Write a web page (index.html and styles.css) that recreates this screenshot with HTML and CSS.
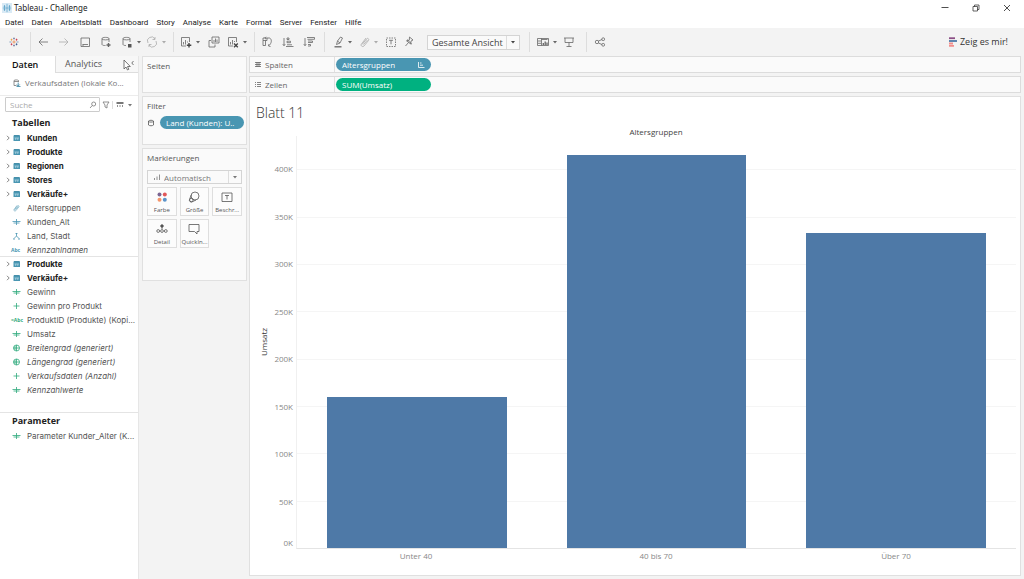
FILE: index.html
```html
<!DOCTYPE html>
<html lang="de">
<head>
<meta charset="utf-8">
<title>Tableau - Challenge</title>
<link rel="stylesheet" href="styles.css">
</head>
<body>
<svg class="defs" aria-hidden="true">
  <symbol id="logo" viewBox="0 0 12 12"><path d="M6 4v4M4 6h4" stroke="#e8762d"/><path d="M6 .5v2.500M5 1.800h2M6 9v2.500M5 10.200h2" stroke="#5b6591"/><path d="M.5 6H3M9 6h2.500" stroke="#4e79a7"/><path d="M3 2v2.500M2 3.200h2.200" stroke="#eb912c"/><path d="M9 2v2.500M8 3.200h2.200M3 7.500V10M2 8.800h2.200" stroke="#c72035"/><path d="M9 7.500V10M8 8.800h2.200" stroke="#1f447e"/></symbol>
  <symbol id="tile" viewBox="0 0 12 12"><path d="M6 1v10M1 6h10M3 2.500v7M9 2.500v7M2 4h2M8 4h2M2 8h2M8 8h2" stroke="#4f9bc4"/></symbol>
  <symbol id="back" viewBox="0 0 12 12"><path d="M11 6H2M5.500 2.500 2 6l3.500 3.500"/></symbol>
  <symbol id="fwd" viewBox="0 0 12 12"><path d="M1 6h9M6.500 2.500 10 6 6.500 9.500"/></symbol>
  <symbol id="save" viewBox="0 0 12 12"><path d="M2 2h8.500v8.500H2zM3.500 8.500h5.500M4 10V8.500"/></symbol>
  <symbol id="dbadd" viewBox="0 0 12 12"><path d="M2 8.500v-6C2 1 9 1 9 2.500V6M2 3c1 1.200 6 1.200 7 0M2 8.500c.5 1 2 1 3.500 1"/><path d="M8.500 7v4M6.500 9h4" stroke-width="1.400"/></symbol>
  <symbol id="dbpause" viewBox="0 0 12 12"><path d="M2 8.500v-6C2 1 9 1 9 2.500V6M2 3c1 1.200 6 1.200 7 0M2 8.500c.5 1 2 1 3 1"/><path d="M7 8h3.500v3.500H7z" fill="#555" stroke="none"/></symbol>
  <symbol id="refresh" viewBox="0 0 12 12"><path d="M2 7a4 4 0 0 1 7-4M10 5a4 4 0 0 1-7 4M9 1v2.500H6.500M3 11V8.500h2.500"/></symbol>
  <symbol id="chartadd" viewBox="0 0 12 12"><path d="M6 10H1.500V1.500h8V6M3.500 8.500V6M5.500 8.500V4M7.500 6.500V5.500"/><path d="M9 7v4.500M6.800 9.200h4.500" stroke="#444" stroke-width="1.400"/></symbol>
  <symbol id="dup" viewBox="0 0 12 12"><path d="M4 1h7v6H4zM6 6V4M7.500 6V2.500M9 6V3.500M3 4.500H1V11h6V8.500"/></symbol>
  <symbol id="chartx" viewBox="0 0 12 12"><path d="M6 10H1.500V1.500h8V6M3.500 8.500V6M5.500 8.500V4M7.500 6V5"/><path d="m7 7.500 3.800 3.800M10.800 7.500 7 11.300" stroke="#444" stroke-width="1.300"/></symbol>
  <symbol id="swap" viewBox="0 0 12 12"><path d="M2 2h6.500c2.500 1 2.500 5-.5 7.500M2 2v2.500h4V2M2 4.500v5h2.500v-5M5 .8 3.800 2 5 3.200M9.500 10.500 7.500 10l.5-2"/></symbol>
  <symbol id="asc" viewBox="0 0 12 12"><path d="M2 2v7.500M.8 8.200 2 9.700l1.200-1.500M5 2h2v1.500H5zM5 5.200h3.500v1.500H5zM4 10.500h7.500M5 8.800h5"/></symbol>
  <symbol id="desc" viewBox="0 0 12 12"><path d="M2 2v7.500M.8 8.200 2 9.700l1.200-1.500M4 1.500h7.500v1.800H4.500M5 5h4.500v1.500H5M5 8.500h2.500V10H5"/></symbol>
  <symbol id="pen" viewBox="0 0 12 12"><path d="M3.500 8.500 4.500 5l3-4 2 1-2.500 5zM4.500 5l2.500 2"/><path d="M1.500 10.800h7" stroke-width="1.300"/></symbol>
  <symbol id="clip" viewBox="0 0 12 12"><path d="M3 8.500 7.500 3c1-1.500 3 0 2 1.500L5 10C3.500 11.500 1 9.500 2.500 8L7 2M4.500 8.500l4-4.500"/></symbol>
  <symbol id="text" viewBox="0 0 12 12"><path d="M1.500 2h9v8.500h-9z" stroke-dasharray="1.500 1"/><path d="M4 4.300h4M6 4.300v4"/></symbol>
  <symbol id="pin" viewBox="0 0 12 12"><path d="m6.500 1 3.500 3-2 1-.3 3L3.500 4.800l2.800-.6zM5.500 6.500 2.500 10M4 3.500l5 4.800"/></symbol>
  <symbol id="cards" viewBox="0 0 12 12"><path d="M.5 2.500h11v7H.5zM4.500 2.500v7M1 5h3M1 7.300h3M4.500 3.500h6"/><path d="M6.300 9V7M8.200 9V5.500M10 9V6.500" stroke-width="1.300"/></symbol>
  <symbol id="present" viewBox="0 0 12 12"><path d="M1 2h10M2 2v4.500h8V2M6 6.500v4M3.500 10.500h5"/></symbol>
  <symbol id="share" viewBox="0 0 12 12"><path d="m4.500 5 3.500-1.500M4.500 7 8 8.500"/><circle cx="3" cy="6" r="1.700"/><circle cx="9.200" cy="3.200" r="1.400"/><circle cx="9.200" cy="8.800" r="1.400"/></symbol>
  <symbol id="show" viewBox="0 0 10 10"><path d="M1 1.200h6" stroke="#8b4f86" stroke-width="1.800"/><path d="M1 4h8" stroke="#4e79a7" stroke-width="1.800"/><path d="M1 6.500h4M1 8.800h5" stroke="#f28e8c" stroke-width="1.800"/></symbol>
  <symbol id="caret" viewBox="0 0 6 6"><path d="M1 2h4L3 4.500z" fill="currentColor" stroke="none"/></symbol>
  <symbol id="chev" viewBox="0 0 6 6"><path d="m2 .8 2.200 2.200L2 5.200"/></symbol>
  <symbol id="table" viewBox="0 0 8 8"><path d="M1 1.500h6.500V7H1z" fill="#4996b2" stroke="none"/><path d="M1.500 1.500h5.500" stroke="#2f7f9e"/><path d="M3.200 4v2M5.300 4v2M2 4h4.500" stroke="#b9dae5" stroke-width=".7"/></symbol>
  <symbol id="hash" viewBox="0 0 10 8"><path d="M1 3.500h8M2 5h6M5 1v6"/></symbol>
  <symbol id="plus" viewBox="0 0 10 8"><path d="M2 4h6M5 1v6"/></symbol>
  <symbol id="geo" viewBox="0 0 10 8"><path d="M5 1v3L2.500 6.500M5 4l2.500 2.500M4 1.500h2M1.500 7h2M6.500 7h2"/></symbol>
  <symbol id="globe" viewBox="0 0 10 8"><circle cx="5" cy="4" r="3"/><path d="M2 4h6M5 1v6M3.500 2v4"/></symbol>
  <symbol id="search" viewBox="0 0 8 8"><circle cx="4.700" cy="3" r="2"/><path d="M3.300 4.500 1 7"/></symbol>
  <symbol id="filter" viewBox="0 0 8 8"><path d="M1 1h6L5 4v3L3 6V4z"/></symbol>
  <symbol id="view" viewBox="0 0 8 8"><path d="M.5 2h7" stroke-width="2"/><path d="M1.500 4v2M4 4v2M6.500 4v2"/></symbol>
  <symbol id="db" viewBox="0 0 8 8"><path d="M1.500 2v4c1 1 4 1 5 0V2c-1-1-4-1-5 0zM1.500 2.500c1 .8 4 .8 5 0"/></symbol>
  <symbol id="source" viewBox="0 0 8 8"><path d="M1 1.500v5h2.500M1 1.500c1-.8 3.500-.8 4.500 0V3M1 2.500h4.500" stroke="#777"/><path d="M5.200 3.500v3M3.800 5.500 5.200 7l1.500-1.500M3.500 7.500h4" stroke="#2f7f9e"/></symbol>
  <symbol id="bars" viewBox="0 0 8 8"><path d="M1.500 7V5M4 7V3.500M6.500 7V1.500"/></symbol>
</svg>

<header>
  <div class="titlebar">
    <svg class="i10 tile"><use href="#tile"/></svg>
    <span>Tableau - Challenge</span>
    <div class="window-buttons">
      <button aria-label="Minimieren"><svg viewBox="0 0 8 8"><path d="M.5 3.500h7"/></svg></button>
      <button aria-label="Verkleinern"><svg viewBox="0 0 8 8"><path d="M1 2.500h4.500V7H1zM2.500 2.500V1H7v4.500H5.500" stroke-width=".7"/></svg></button>
      <button aria-label="Schließen"><svg viewBox="0 0 8 8"><path d="m1 1 6 6M7 1 1 7"/></svg></button>
    </div>
  </div>
  <nav class="menubar">
    <button>Datei</button><button>Daten</button><button>Arbeitsblatt</button><button>Dashboard</button><button>Story</button><button>Analyse</button><button>Karte</button><button>Format</button><button>Server</button><button>Fenster</button><button>Hilfe</button>
  </nav>
  <div class="toolbar">
    <div class="group g-logo"><button aria-label="Startseite"><svg class="i10"><use href="#logo"/></svg></button></div>
    <div class="group g-file">
      <button aria-label="Zurück"><svg><use href="#back"/></svg></button>
      <button aria-label="Vorwärts" class="dim"><svg><use href="#fwd"/></svg></button>
      <button aria-label="Speichern"><svg><use href="#save"/></svg></button>
      <button aria-label="Neue Datenquelle"><svg><use href="#dbadd"/></svg></button>
      <div class="updates">
        <button aria-label="Updates anhalten"><svg><use href="#dbpause"/></svg><svg class="caret"><use href="#caret"/></svg></button>
        <button aria-label="Aktualisieren" class="dim"><svg><use href="#refresh"/></svg><svg class="caret"><use href="#caret"/></svg></button>
      </div>
    </div>
    <div class="group g-sheet">
      <button aria-label="Neues Blatt"><svg><use href="#chartadd"/></svg><svg class="caret"><use href="#caret"/></svg></button>
      <button aria-label="Duplizieren"><svg><use href="#dup"/></svg></button>
      <button aria-label="Löschen"><svg><use href="#chartx"/></svg><svg class="caret"><use href="#caret"/></svg></button>
    </div>
    <div class="group g-sort">
      <button aria-label="Vertauschen"><svg><use href="#swap"/></svg></button>
      <button aria-label="Aufsteigend"><svg><use href="#asc"/></svg></button>
      <button aria-label="Absteigend"><svg><use href="#desc"/></svg></button>
    </div>
    <div class="group g-mark">
      <button aria-label="Hervorheben"><svg><use href="#pen"/></svg><svg class="caret"><use href="#caret"/></svg></button>
      <button aria-label="Gruppieren" class="dim"><svg><use href="#clip"/></svg><svg class="caret"><use href="#caret"/></svg></button>
      <button aria-label="Beschriftungen"><svg><use href="#text"/></svg></button>
      <button aria-label="Anheften"><svg><use href="#pin"/></svg></button>
      <div class="select-box fit"><select aria-label="Anpassen"><option>Gesamte Ansicht</option></select><svg class="caret"><use href="#caret"/></svg></div>
    </div>
    <div class="group g-cards">
      <button aria-label="Karten"><svg><use href="#cards"/></svg><svg class="caret"><use href="#caret"/></svg></button>
      <button aria-label="Präsentation"><svg><use href="#present"/></svg></button>
    </div>
    <div class="group g-share"><button aria-label="Teilen"><svg><use href="#share"/></svg></button></div>
    <button class="show-me"><svg class="i10"><use href="#show"/></svg>Zeig es mir!</button>
  </div>
</header>

<div class="workspace">
  <aside class="data-pane">
    <div class="tabs">
      <button class="tab active">Daten</button>
      <button class="tab">Analytics</button>
      <span class="collapse"><svg viewBox="0 0 12 12"><path d="M2 1v9l2-2 1.500 3 1.300-.7L5.500 7.500h2.800z" fill="#fff"/><path d="M11.500 2 9.800 4l1.700 2"/></svg></span>
    </div>
    <div class="source"><svg class="i8"><use href="#source"/></svg><span>Verkaufsdaten (lokale Ko...</span></div>
    <div class="search-row">
      <label class="search"><input type="text" placeholder="Suche" aria-label="Suche"><svg class="i8"><use href="#search"/></svg></label>
      <button aria-label="Filtern"><svg class="i8"><use href="#filter"/></svg></button>
      <button class="view" aria-label="Ansicht"><svg class="i8"><use href="#view"/></svg><svg class="caret"><use href="#caret"/></svg></button>
    </div>
    <h2>Tabellen</h2>
    <ul class="fields dims">
      <li class="table"><svg class="chev"><use href="#chev"/></svg><svg class="ic"><use href="#table"/></svg>Kunden</li>
      <li class="table"><svg class="chev"><use href="#chev"/></svg><svg class="ic"><use href="#table"/></svg>Produkte</li>
      <li class="table"><svg class="chev"><use href="#chev"/></svg><svg class="ic"><use href="#table"/></svg>Regionen</li>
      <li class="table"><svg class="chev"><use href="#chev"/></svg><svg class="ic"><use href="#table"/></svg>Stores</li>
      <li class="table"><svg class="chev"><use href="#chev"/></svg><svg class="ic"><use href="#table"/></svg>Verkäufe+</li>
      <li><svg class="ic" viewBox="0 0 12 12"><use href="#clip"/></svg>Altersgruppen</li>
      <li><svg class="ic"><use href="#hash"/></svg>Kunden_Alt</li>
      <li><svg class="ic"><use href="#geo"/></svg>Land, Stadt</li>
      <li class="gen"><b class="abc">Abc</b>Kennzahlnamen</li>
    </ul>
    <ul class="fields measures">
      <li class="table"><svg class="chev"><use href="#chev"/></svg><svg class="ic"><use href="#table"/></svg>Produkte</li>
      <li class="table"><svg class="chev"><use href="#chev"/></svg><svg class="ic"><use href="#table"/></svg>Verkäufe+</li>
      <li><svg class="ic"><use href="#hash"/></svg>Gewinn</li>
      <li><svg class="ic"><use href="#plus"/></svg>Gewinn pro Produkt</li>
      <li><b class="abc">=Abc</b>ProduktID (Produkte) (Kopi...</li>
      <li><svg class="ic"><use href="#hash"/></svg>Umsatz</li>
      <li class="gen"><svg class="ic"><use href="#globe"/></svg>Breitengrad (generiert)</li>
      <li class="gen"><svg class="ic"><use href="#globe"/></svg>Längengrad (generiert)</li>
      <li class="gen"><svg class="ic"><use href="#plus"/></svg>Verkaufsdaten (Anzahl)</li>
      <li class="gen"><svg class="ic"><use href="#hash"/></svg>Kennzahlwerte</li>
    </ul>
    <div class="params">
      <h2>Parameter</h2>
      <ul class="fields measures"><li><svg class="ic"><use href="#hash"/></svg>Parameter Kunder_Alter (K...</li></ul>
    </div>
  </aside>

  <div class="cards">
    <section class="card pages"><h3>Seiten</h3></section>
    <section class="card filters"><h3>Filter</h3>
      <div class="filter-row"><svg class="i8"><use href="#db"/></svg><button class="pill">Land (Kunden): U..</button></div>
    </section>
    <section class="card marks"><h3>Markierungen</h3>
      <div class="select-box mark-type"><svg class="i8"><use href="#bars"/></svg><select aria-label="Markierungstyp"><option>Automatisch</option></select><svg class="caret"><use href="#caret"/></svg></div>
      <div class="mark-grid">
        <button><svg viewBox="0 0 12 12" class="solid"><circle cx="3.500" cy="3.500" r="2" fill="#7b6592"/><circle cx="8.800" cy="3.500" r="2" fill="#e15759"/><circle cx="3.500" cy="8.800" r="2" fill="#f5956a"/><circle cx="8.800" cy="8.800" r="2" fill="#5b93c9"/></svg>Farbe</button>
        <button><svg viewBox="0 0 12 12"><circle cx="7" cy="5" r="4"/><path d="M3.300 3.800 1.500 8.500a1.900 1.900 0 0 0 2.500 2.400L8 9"/><circle cx="3.400" cy="9" r="1.800"/></svg>Größe</button>
        <button><svg viewBox="0 0 12 12"><path d="M1 2h10v8.500H1zM4 4.500h4M6 4.500v4"/></svg>Beschr...</button>
        <button><svg viewBox="0 0 12 12"><circle cx="6" cy="3" r="1.300" fill="#555"/><path d="M6 4v2"/><circle cx="2.200" cy="8" r="1.400"/><circle cx="6" cy="8" r="1.400"/><circle cx="9.800" cy="8" r="1.400"/></svg>Detail</button>
        <button><svg viewBox="0 0 12 12"><path d="M1 1.500h10v7H9V11L6.500 8.500H1z"/></svg>QuickIn...</button>
      </div>
    </section>
  </div>

  <main>
    <div class="shelf"><div class="shelf-name"><svg viewBox="0 0 8 8"><path d="M1 1.500h6M1 3.500h6M1 5.500h6M3 1v5M5 1v5"/></svg>Spalten</div><button class="pill">Altersgruppen<svg viewBox="0 0 8 8"><path d="M1.500 1v5.500h6M3 2h1.500M3 4.200h3"/></svg></button></div>
    <div class="shelf"><div class="shelf-name"><svg viewBox="0 0 8 8"><path d="M1 1.500h1M3 1.500h4M1 3.500h1M3 3.500h4M1 5.500h1M3 5.500h4"/></svg>Zeilen</div><button class="pill green">SUM(Umsatz)</button></div>
    <section class="sheet">
      <h1>Blatt 11</h1>
      <div class="chart">
        <div class="chart-title">Altersgruppen</div>
        <div class="y-title"><span>Umsatz</span></div>
        <div class="y-axis"><i></i><span>400K</span><span>350K</span><span>300K</span><span>250K</span><span>200K</span><span>150K</span><span>100K</span><span class="last">50K<em>0K</em></span></div>
        <div class="plot">
          <i></i><i></i><i></i><i></i><i></i><i></i><i></i><i></i><i></i>
          <div class="bars"><div style="height:36.700%"></div><div style="height:95.400%"></div><div style="height:76.500%"></div></div>
        </div>
        <div class="x-axis"><span>Unter 40</span><span>40 bis 70</span><span>Über 70</span></div>
      </div>
    </section>
  </main>
</div>
</body>
</html>
```

FILE: styles.css
```css
* { box-sizing: border-box; }
body {
  margin: 0;
  min-height: 100vh;
  display: flex;
  flex-direction: column;
  background: #f3f3f3;
  color: #555;
  font: 8px/14px "Open Sans", "Noto Sans", sans-serif;
}
.defs { position: absolute; width: 0; height: 0; }
button, select, input { font: inherit; color: inherit; border: 0; padding: 0; margin: 0; background: none; }
ul { list-style: none; margin: 0; padding: 0; }
h1, h2, h3 { margin: 0; }
svg { width: 12px; height: 12px; fill: none; stroke: currentColor; stroke-width: .8; flex: none; display: block; }
.i10 { width: 10px; height: 10px; }
.i8 { width: 8px; height: 8px; }
.caret { width: 6px; height: 6px; }

.titlebar { display: flex; align-items: center; gap: 2px; height: 16px; padding-left: 2px; background: #fff; color: #222; font-family: "Noto Sans", "Open Sans", sans-serif; }
.tile { background: #d9eaf5; }
.window-buttons { margin-left: auto; display: flex; gap: 23px; padding-right: 13px; }
.window-buttons svg { width: 8px; height: 8px; }
.menubar { display: flex; gap: 8px; height: 12px; padding-left: 5px; background: #fff; color: #222; font-family: Roboto, "Open Sans", sans-serif; line-height: 13px; }
.toolbar { display: flex; align-items: center; height: 28px; color: #666; }
.group { display: flex; align-items: center; height: 20px; border-right: 1px solid #ddd; }
.group button { display: flex; align-items: center; gap: 3px; }
.g-logo { padding: 0 11px 0 9px; }
.g-file { gap: 9px; padding: 0 6px; }
.updates { display: flex; gap: 4px; }
.g-sheet { gap: 7px; padding: 0 6px; }
.g-sort { gap: 9px; padding: 0 9px 0 6px; }
.g-mark { gap: 6px; padding: 0 9px 0 8px; }
.g-mark button { gap: 2px; }
.g-cards { gap: 5px; padding: 0 11px 0 7px; }
.g-share { padding-left: 7px; border: 0; }
.dim { opacity: .5; }
.select-box { display: flex; align-items: center; border: 1px solid #d4d4d4; background: #fafafa; }
.select-box select { appearance: none; flex: 1; min-width: 0; height: 100%; border-right: 1px solid #ddd; }
.select-box .caret { margin: 0 3px; }
.fit { width: 93px; height: 15px; margin-left: 6px; font-size: 9px; color: #444; }
.fit select { padding-left: 4px; }
.show-me { display: flex; align-items: center; gap: 2px; margin-left: auto; padding-right: 16px; font-size: 9px; color: #333; }

.workspace { flex: 1; display: grid; grid-template-columns: 139px 106px minmax(0, 1fr); column-gap: 2px; padding-right: 3px; }
.data-pane { background: #fff; border-right: 1px solid #e6e6e6; overflow: hidden; }
.tabs { display: grid; grid-template-columns: 56px 1fr 16px; height: 17px; font-size: 9px; line-height: 16px; }
.tab, .collapse { background: #f7f7f7; border-bottom: 1px solid #ddd; }
.tab { text-align: left; padding: 0 0 0 9px; }
.tab.active { background: #fff; border-bottom: 0; border-right: 1px solid #ddd; font-weight: 600; color: #111; padding-left: 12px; }
.collapse { padding-top: 3px; }
.source { display: flex; align-items: center; gap: 4px; height: 23px; padding: 0 0 3px 13px; color: #777; white-space: nowrap; border-bottom: 1px solid #ececec; }
.search-row { display: flex; align-items: center; gap: 2px; padding: 1px 0 3px 5px; color: #777; }
.search { display: flex; align-items: center; width: 95px; height: 15px; border: 1px solid #ccc; border-radius: 1px; padding: 0 2px 0 4px; }
.search input { flex: 1; min-width: 0; outline: 0; }
.search input::placeholder { color: #aaa; }
.view { display: flex; align-items: center; gap: 3px; padding-left: 3px; border-left: 1px solid #ddd; }
h2 { font-size: 9px; line-height: 15px; font-weight: 700; color: #222; padding: 0 0 1px 12px; }
.fields li { position: relative; display: flex; align-items: center; gap: 4px; height: 14px; padding-left: 11px; font-family: Inter, "Open Sans", sans-serif; white-space: nowrap; }
.ic { width: 11px; height: 8px; margin-right: 1px; color: #4996b2; }
.measures .ic { color: #2fa97c; }
.fields .table { font-weight: 700; color: #222; }
.chev { position: absolute; left: 5px; width: 6px; height: 6px; color: #666; }
.gen { font-style: italic; }
.abc { width: 12px; font: 700 5px/8px "Open Sans", sans-serif; color: #4996b2; }
.measures .abc { color: #2fa97c; }
.dims { height: 126px; border-bottom: 1px solid #e4e4e4; }
.params { margin-top: 15px; border-top: 1px solid #e4e4e4; }

.cards { display: flex; flex-direction: column; gap: 3px; margin-left: 1px; }
.card { border: 1px solid #e0e0e0; background: #fafafa; padding: 1px 4px; }
.card h3 { font-size: 8px; line-height: 15px; font-weight: 400; color: #555; }
.pages { height: 37px; }
.filters { height: 49px; }
.marks { height: 133px; }
.filter-row { display: flex; align-items: center; gap: 5px; padding-top: 3px; }
.filter-row .pill { flex: 1; min-width: 0; width: auto; margin-right: -2px; padding-left: 6px; white-space: nowrap; }
.pill { display: flex; align-items: center; justify-content: space-between; width: 95px; height: 13px; padding: 0 6px; border-radius: 7px; background: #4996b2; color: #fff; font-weight: 500; }
.pill svg { width: 8px; height: 8px; }
.green { background: #00b180; }
.mark-type { height: 14px; margin: 5px 0 3px; color: #777; }
.mark-type .i8 { margin: 0 3px 0 5px; }
.mark-grid { display: grid; grid-template-columns: repeat(3, 1fr); gap: 3px; }
.mark-grid button { display: flex; flex-direction: column; align-items: center; gap: 2px; height: 29px; padding-top: 3px; border: 1px solid #dedede; background: #fcfcfc; font-size: 6px; line-height: 10px; white-space: nowrap; }
.solid { stroke: none; }

main { display: flex; flex-direction: column; gap: 3px; min-width: 0; padding-bottom: 3px; }
.shelf { display: flex; align-items: center; height: 17px; border: 1px solid #dcdcdc; background: #fafafa; }
.shelf-name { display: flex; align-items: center; gap: 3px; width: 85px; height: 100%; padding-left: 4px; margin-right: 1px; border-right: 1px solid #e0e0e0; color: #666; }
.shelf-name svg { width: 8px; height: 8px; }
.sheet { flex: 1; display: flex; flex-direction: column; background: #fff; border: 1px solid #e0e0e0; padding: 5px 4px 12px 6px; }
h1 { font-size: 14px; line-height: 21px; font-weight: 300; color: #333; }
.chart { flex: 1; display: grid; grid-template-columns: 16px 24px minmax(0, 1fr); grid-template-rows: 13px minmax(0, 1fr) 14px; color: #888; }
.chart-title { grid-column: 3; text-align: center; color: #444; line-height: 18px; }
.y-title { grid-area: 2 / 1; display: grid; place-items: center; color: #333; }
.y-title span { writing-mode: vertical-rl; transform: rotate(180deg); }
.y-axis, .plot { display: grid; grid-template-rows: minmax(0, 33fr) repeat(8, minmax(0, 47fr)); grid-row: 2; }
.y-axis { grid-column: 2; text-align: right; padding-right: 3px; }
.y-axis span { margin-top: -7px; }
.y-axis .last { display: flex; flex-direction: column; justify-content: space-between; }
.y-axis em { font-style: normal; line-height: 12px; }
.plot { grid-column: 3; position: relative; border-left: 1px solid #f0f0f0; border-bottom: 1px solid #e4e4e4; }
.plot i + i { border-top: 1px solid #f5f5f5; }
.bars { position: absolute; inset: 0; display: grid; grid-template-columns: repeat(3, 1fr); align-items: end; }
.bars div { width: 75%; justify-self: center; background: #4e79a7; }
.x-axis { grid-area: 3 / 3; display: grid; grid-template-columns: repeat(3, 1fr); text-align: center; }
```
